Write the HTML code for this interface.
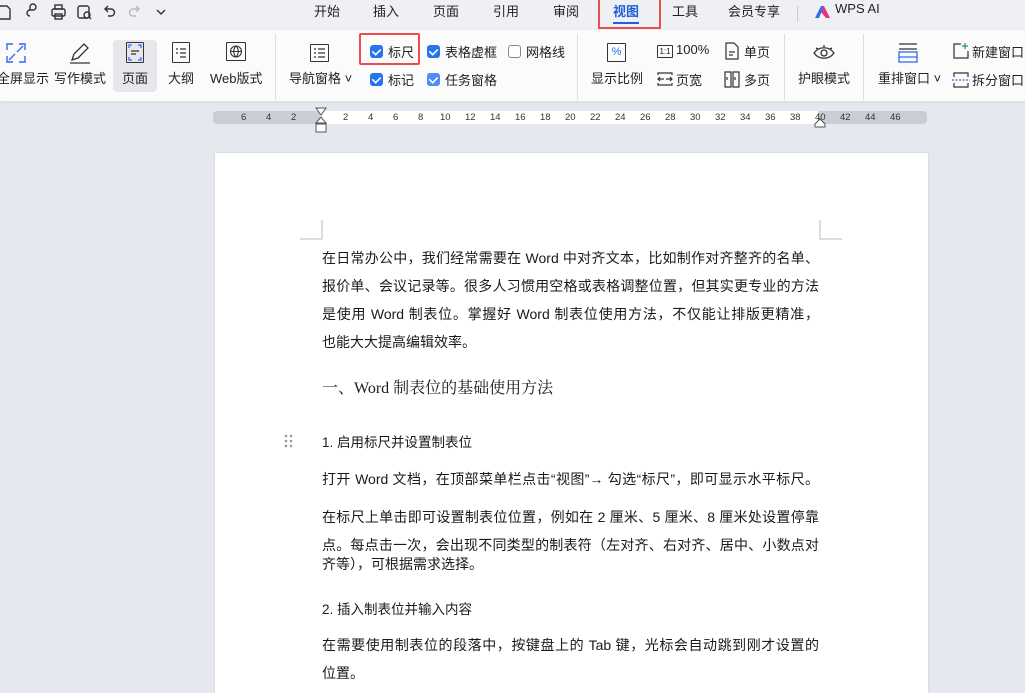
<!DOCTYPE html>
<html><head><meta charset="utf-8"><style>
*{margin:0;padding:0;box-sizing:border-box}
body{width:1025px;height:680px;overflow:hidden;background:#e5e9ef;font-family:"Liberation Sans","Noto Sans CJK SC",sans-serif;color:#222;position:relative}
.a{position:absolute;white-space:nowrap}
#top{position:absolute;left:0;top:0;width:1025px;height:30px;background:#eef0f4}
#rib{position:absolute;left:0;top:30px;width:1025px;height:72px;background:#fbfbfc;border-bottom:1px solid #dde0e5;box-shadow:0 1px 3px rgba(0,0,0,.06)}
.tab{position:absolute;top:1px;font-size:13px;color:#222}
.lbl{position:absolute;font-size:13px;color:#222}
.sep{position:absolute;width:1px;background:#dcdfe4}
.cb{position:absolute;width:13px;height:13px;border-radius:3px;background:#2a73f0}
.cb:after{content:"";position:absolute;left:3px;top:1px;width:5px;height:8px;border:solid #fff;border-width:0 2px 2px 0;transform:rotate(45deg) scale(.8)}
.ic{position:absolute;border:1.3px solid #333;border-radius:1px}
.ln{position:absolute;left:322px;width:497px;font-size:14px;text-align:justify;text-align-last:justify;color:#1a1a1a}
.ll{text-align-last:left}
#page{position:absolute;left:215px;top:153px;width:713px;height:540px;background:#fff;box-shadow:0 0 2px rgba(0,0,0,.15)}
.rn{position:absolute;top:112px;font-size:9.5px;color:#333}
</style></head><body>
<div id="top"></div>
<svg class="a" style="left:0;top:2px" width="180" height="20" fill="none" stroke="#333" stroke-width="1.4">
<path d="M0 4h7l3 3v10H0"/><path d="M30 14a3 3 0 1 1 0-6v-3a3 3 0 0 1 6 0a3 3 0 0 1-3 3h-3"/>
<rect x="52" y="7" width="13" height="7" rx="1.5"/><rect x="55" y="3" width="7" height="4"/><rect x="55" y="12" width="7" height="5"/>
<rect x="78" y="4" width="11" height="12" rx="2"/><circle cx="87" cy="13" r="3"/><path d="M89 15l2 2"/>
<path d="M108 4l-3 3l3 3M105 7h6a3 3 0 0 1 0 7h-3"/>
<path stroke="#bbb" d="M136 4l3 3l-3 3M139 7h-6a3 3 0 0 0 0 7h3"/>
<path d="M157 8l4 4l4-4"/><path stroke="#ccc" d="M182 2v18"/>
</svg>
<div class="tab" style="left:314px">开始</div>
<div class="tab" style="left:373px">插入</div>
<div class="tab" style="left:433px">页面</div>
<div class="tab" style="left:493px">引用</div>
<div class="tab" style="left:553px">审阅</div>
<div class="tab" style="left:613px;color:#1f5fd6;font-weight:bold">视图</div>
<div class="a" style="left:613px;top:22px;width:26px;height:2px;background:#2160d8"></div>
<div class="a" style="left:598px;top:-2px;width:63px;height:31px;border:2px solid #ee4c4c"></div>
<div class="tab" style="left:672px">工具</div>
<div class="tab" style="left:728px">会员专享</div>
<div class="a" style="left:797px;top:6px;width:1px;height:16px;background:#ccc"></div>
<svg class="a" style="left:815px;top:5px" width="16" height="14"><path d="M0 13L6 1h3L4 13z" fill="#2f6bf0"/><path d="M6 7l3-6l6 12h-4z" fill="#e9327d"/></svg>
<div class="tab" style="left:835px">WPS AI</div>

<div id="rib"></div>
<svg class="a" style="left:5px;top:42px" width="22" height="22" fill="none" stroke="#2f6bf0" stroke-width="1.4"><path d="M8 2H2v6M14 2h6v6M2 14v6h6M20 14v6h-6M4 18l6-6M18 4l-6 6"/></svg>
<div class="lbl" style="left:-3px;top:68px">全屏显示</div>
<svg class="a" style="left:68px;top:41px" width="24" height="24" fill="none" stroke="#333" stroke-width="1.3"><path d="M4 19l2-6L16 3l4 4L10 17z M4 19l6-2 M2 22h20"/></svg>
<div class="lbl" style="left:54px;top:68px">写作模式</div>
<div class="a" style="left:113px;top:40px;width:44px;height:52px;background:#e6e7ea;border-radius:4px"></div>
<div class="ic" style="left:126px;top:42px;width:18px;height:21px"></div>
<svg class="a" style="left:126px;top:42px" width="18" height="21" fill="none" stroke="#2f6bf0" stroke-width="1.3"><path d="M3 6V3h3M12 3h3v3M3 15v3h3M15 15v3h-3"/><path stroke="#333" d="M5 9h8M5 12h5"/></svg>
<div class="lbl" style="left:122px;top:68px">页面</div>
<div class="ic" style="left:172px;top:42px;width:18px;height:21px"></div>
<svg class="a" style="left:172px;top:42px" width="18" height="21" fill="none" stroke="#333" stroke-width="1.2"><path d="M4 7h2M8 7h6M4 11h2M8 11h6M8 15h6"/></svg>
<div class="lbl" style="left:168px;top:68px">大纲</div>
<div class="ic" style="left:226px;top:42px;width:20px;height:19px"></div>
<svg class="a" style="left:226px;top:42px" width="20" height="19" fill="none" stroke="#333" stroke-width="1.1"><circle cx="10" cy="9.5" r="5.5"/><path d="M4.5 9.5h11M10 4c-3 3-3 8 0 11M10 4c3 3 3 8 0 11"/></svg>
<div class="lbl" style="left:210px;top:68px">Web版式</div>
<div class="sep" style="left:275px;top:34px;height:66px"></div>
<div class="ic" style="left:310px;top:44px;width:19px;height:18px"></div>
<svg class="a" style="left:310px;top:44px" width="19" height="18" fill="none" stroke="#333" stroke-width="1.2"><path d="M4 5h2M8 5h7M4 9h2M8 9h7M4 13h2M8 13h7"/></svg>
<div class="lbl" style="left:289px;top:68px">导航窗格 ˅</div>
<div class="a" style="left:359px;top:33px;width:61px;height:32px;border:2px solid #ee4c4c;border-radius:2px"></div>
<div class="cb" style="left:370px;top:45px"></div><div class="lbl" style="left:388px;top:42px">标尺</div>
<div class="cb" style="left:427px;top:45px"></div><div class="lbl" style="left:445px;top:42px">表格虚框</div>
<div class="a" style="left:508px;top:45px;width:13px;height:13px;border:1px solid #888;border-radius:3px;background:#fff"></div><div class="lbl" style="left:526px;top:42px">网格线</div>
<div class="cb" style="left:370px;top:73px"></div><div class="lbl" style="left:388px;top:70px">标记</div>
<div class="cb" style="left:427px;top:73px;background:#4f8cf3"></div><div class="lbl" style="left:445px;top:70px">任务窗格</div>
<div class="sep" style="left:577px;top:34px;height:66px"></div>
<div class="ic" style="left:607px;top:43px;width:19px;height:19px;font-size:11px;text-align:center;line-height:16px;color:#2f6bf0;border-color:#333">%</div>
<div class="lbl" style="left:591px;top:68px">显示比例</div>
<div class="ic" style="left:657px;top:45px;width:16px;height:13px;font-size:8px;text-align:center;line-height:11px">1:1</div>
<div class="lbl" style="left:676px;top:42px">100%</div>
<svg class="a" style="left:656px;top:71px" width="18" height="16" fill="none" stroke="#333" stroke-width="1.2"><path d="M2 4V2h14v2M2 12v2h14v-2M4 6l-2 2l2 2M2 8h6M14 6l2 2l-2 2M16 8h-6"/></svg>
<div class="lbl" style="left:676px;top:70px">页宽</div>
<svg class="a" style="left:724px;top:42px" width="16" height="18" fill="none" stroke="#333" stroke-width="1.2"><path d="M2 1h8l4 4v12H2z M5 10h6M5 13h4"/></svg>
<div class="lbl" style="left:744px;top:42px">单页</div>
<svg class="a" style="left:723px;top:71px" width="18" height="17" fill="none" stroke="#333" stroke-width="1.2"><path d="M2 1h6v15H2zM10 1h6v15h-6zM4 6v3M12 6v3"/></svg>
<div class="lbl" style="left:744px;top:70px">多页</div>
<div class="sep" style="left:784px;top:34px;height:66px"></div>
<svg class="a" style="left:813px;top:44px" width="22" height="16" fill="none" stroke="#333" stroke-width="1.3"><path d="M1 9c5-7 15-7 20 0c-5 7-15 7-20 0z"/><circle cx="11" cy="9" r="3"/><path d="M3 4l2 1M19 4l-2 1M11 1v2"/></svg>
<div class="lbl" style="left:798px;top:68px">护眼模式</div>
<div class="sep" style="left:863px;top:34px;height:66px"></div>
<svg class="a" style="left:898px;top:42px" width="20" height="22" fill="none" stroke-width="1.3"><path stroke="#333" d="M1 2h18M1 7h18"/><rect x="1" y="10" width="18" height="10" stroke="#2f6bf0"/><path stroke="#2f6bf0" d="M1 15h18"/></svg>
<div class="lbl" style="left:878px;top:68px">重排窗口 ˅</div>
<svg class="a" style="left:952px;top:42px" width="18" height="18" fill="none" stroke-width="1.2"><path stroke="#333" d="M9 2H2v14h14V9"/><path stroke="#1a9b4a" d="M13 1v6M10 4h6"/></svg>
<div class="lbl" style="left:972px;top:42px">新建窗口</div>
<svg class="a" style="left:952px;top:71px" width="18" height="18" fill="none" stroke-width="1.2"><path stroke="#333" d="M2 6V2h14v4M2 12v4h14v-4"/><path stroke="#2f6bf0" stroke-dasharray="2 1.5" d="M0 9h18"/></svg>
<div class="lbl" style="left:972px;top:70px">拆分窗口</div>

<div class="a" style="left:213px;top:111px;width:714px;height:13px;background:#c9ced6;border-radius:4px"></div>
<div class="a" style="left:320px;top:111px;width:498px;height:13px;background:#fff"></div>
<div class="rn" style="left:241px">6</div><div class="rn" style="left:266px">4</div><div class="rn" style="left:291px">2</div>
<div class="rn" style="left:343px">2</div><div class="rn" style="left:368px">4</div><div class="rn" style="left:393px">6</div><div class="rn" style="left:418px">8</div>
<div class="rn" style="left:440px">10</div><div class="rn" style="left:465px">12</div><div class="rn" style="left:490px">14</div><div class="rn" style="left:515px">16</div><div class="rn" style="left:540px">18</div><div class="rn" style="left:565px">20</div><div class="rn" style="left:590px">22</div><div class="rn" style="left:615px">24</div><div class="rn" style="left:640px">26</div><div class="rn" style="left:665px">28</div><div class="rn" style="left:690px">30</div><div class="rn" style="left:715px">32</div><div class="rn" style="left:740px">34</div><div class="rn" style="left:765px">36</div><div class="rn" style="left:790px">38</div><div class="rn" style="left:815px">40</div><div class="rn" style="left:840px">42</div><div class="rn" style="left:865px">44</div><div class="rn" style="left:890px">46</div>
<svg class="a" style="left:314px;top:107px" width="14" height="27" fill="#fff" stroke="#555" stroke-width="1"><path d="M2 1h10l-5 7z"/><path d="M7 10l-5 6h10z"/><rect x="2" y="17" width="10" height="8"/></svg>
<svg class="a" style="left:814px;top:118px" width="12" height="10" fill="#fff" stroke="#555"><path d="M6 1l-5 5v3h10v-3z"/></svg>

<div id="page"></div>
<svg class="a" style="left:300px;top:220px" width="545" height="22" fill="none" stroke="#bbb" stroke-width="1"><path d="M22 0v19H0M520 0v19h22"/></svg>

<div class="ln" style="top:248px">在日常办公中，我们经常需要在 Word 中对齐文本，比如制作对齐整齐的名单、</div>
<div class="ln" style="top:276px">报价单、会议记录等。很多人习惯用空格或表格调整位置，但其实更专业的方法</div>
<div class="ln" style="top:304px">是使用 Word 制表位。掌握好 Word 制表位使用方法，不仅能让排版更精准，</div>
<div class="ln ll" style="top:332px">也能大大提高编辑效率。</div>
<div class="ln ll" style="top:375px;font-family:'Liberation Serif','Noto Serif CJK SC',serif;font-size:16px">一、Word 制表位的基础使用方法</div>
<svg class="a" style="left:284px;top:434px" width="10" height="14" fill="#999"><circle cx="2" cy="2" r="1.3"/><circle cx="7" cy="2" r="1.3"/><circle cx="2" cy="7" r="1.3"/><circle cx="7" cy="7" r="1.3"/><circle cx="2" cy="12" r="1.3"/><circle cx="7" cy="12" r="1.3"/></svg>
<div class="ln ll" style="top:431px;font-size:13.5px">1. 启用标尺并设置制表位</div>
<div class="ln" style="top:469px">打开 Word 文档，在顶部菜单栏点击“视图”→ 勾选“标尺”，即可显示水平标尺。</div>
<div class="ln" style="top:507px">在标尺上单击即可设置制表位位置，例如在 2 厘米、5 厘米、8 厘米处设置停靠</div>
<div class="ln" style="top:535px">点。每点击一次，会出现不同类型的制表符（左对齐、右对齐、居中、小数点对</div>
<div class="ln ll" style="top:554px">齐等），可根据需求选择。</div>
<div class="ln ll" style="top:598px;font-size:13.5px">2. 插入制表位并输入内容</div>
<div class="ln" style="top:635px">在需要使用制表位的段落中，按键盘上的 Tab 键，光标会自动跳到刚才设置的</div>
<div class="ln ll" style="top:663px">位置。</div>
</body></html>
